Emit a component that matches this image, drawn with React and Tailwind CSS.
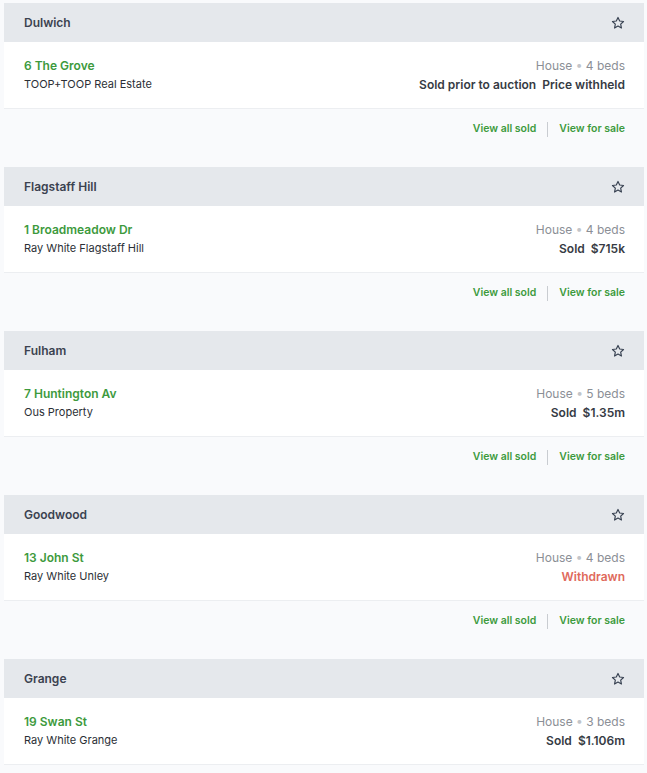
import React from "react";

const data = [
  { suburb: "Dulwich", address: "6 The Grove", agent: "TOOP+TOOP Real Estate", type: "House", beds: 4, result: "Sold prior to auction  Price withheld", red: false },
  { suburb: "Flagstaff Hill", address: "1 Broadmeadow Dr", agent: "Ray White Flagstaff Hill", type: "House", beds: 4, result: "Sold  $715k", red: false },
  { suburb: "Fulham", address: "7 Huntington Av", agent: "Ous Property", type: "House", beds: 5, result: "Sold  $1.35m", red: false },
  { suburb: "Goodwood", address: "13 John St", agent: "Ray White Unley", type: "House", beds: 4, result: "Withdrawn", red: true },
  { suburb: "Grange", address: "19 Swan St", agent: "Ray White Grange", type: "House", beds: 3, result: "Sold  $1.106m", red: false },
];

function Star() {
  return (
    <svg width="14" height="14" viewBox="0 0 24 24" fill="none" stroke="#374151" strokeWidth="2" strokeLinejoin="round">
      <path d="M12 2.5l2.9 6.1 6.6.8-4.9 4.6 1.3 6.6L12 17.3l-5.9 3.3 1.3-6.6-4.9-4.6 6.6-.8z" />
    </svg>
  );
}

function Card({ d, last }) {
  return (
    <div className="w-[640px] mb-[18px]">
      <div className="h-[39px] bg-[#e5e8ec] flex items-center justify-between pl-[20px] pr-[19px]">
        <span className="text-[12px] font-semibold text-[#3b4250]">{d.suburb}</span>
        <Star />
      </div>
      <div className="h-[67px] bg-white border-b border-[#eceef1] flex items-center justify-between pl-[20px] pr-[19px]">
        <div className="flex flex-col">
          <span className="text-[12px] leading-[19px] font-semibold text-[#3d9a3d]">{d.address}</span>
          <span className="text-[11px] leading-[19px] text-[#2b2f36]">{d.agent}</span>
        </div>
        <div className="flex flex-col items-end">
          <span className="text-[12px] leading-[19px] text-[#8b8f96]">
            {d.type} <span className="text-[#c2c5ca]">•</span> {d.beds} beds
          </span>
          <span className={"text-[12px] leading-[19px] font-semibold whitespace-pre " + (d.red ? "text-[#e06a5c]" : "text-[#363b44]")}>
            {d.result}
          </span>
        </div>
      </div>
      {!last && (
        <div className="h-[40px] flex items-center justify-end pr-[19px]">
          <span className="text-[10.5px] font-semibold text-[#3d9a3d]">View all sold</span>
          <span className="w-px h-[15px] bg-[#c9ccd1] ml-[11px] mr-[11px]"></span>
          <span className="text-[10.5px] font-semibold text-[#3d9a3d]">View for sale</span>
        </div>
      )}
    </div>
  );
}

export default function App() {
  return (
    <div className="h-[773px] overflow-hidden bg-[#f9fafc] pt-[3px] pl-[4px]" style={{ fontFamily: "Inter, 'Noto Sans', sans-serif" }}>
      {data.map((d, i) => (
        <Card key={d.suburb} d={d} last={i === data.length - 1} />
      ))}
    </div>
  );
}
